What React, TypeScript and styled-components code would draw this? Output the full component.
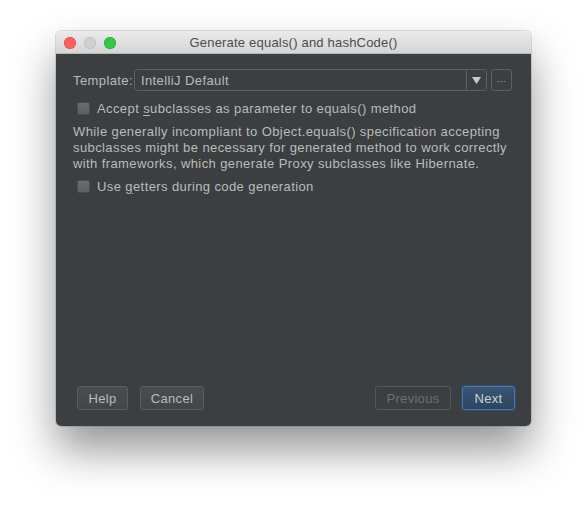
import React from "react";
import styled, { createGlobalStyle } from "styled-components";

const Global = createGlobalStyle`
  html, body { margin: 0; padding: 0; background: #ffffff; }
  body { font-family: "Liberation Sans", Arial, sans-serif; }
`;

const Page = styled.div`
  width: 586px;
  height: 507px;
  padding: 31px 0 0 56px;
  box-sizing: border-box;
`;

const Window = styled.div`
  width: 475px;
  height: 395px;
  border-radius: 5px;
  overflow: hidden;
  display: flex;
  flex-direction: column;
  box-shadow: 0 24px 44px rgba(0, 0, 0, 0.42), 0 0 0 1px rgba(0, 0, 0, 0.12);
`;

const TitleBar = styled.div`
  height: 23px;
  flex: 0 0 23px;
  position: relative;
  display: flex;
  align-items: center;
  justify-content: center;
  background: linear-gradient(#ebebeb, #d5d5d5);
  border-bottom: 1px solid #b8b8b8;
  box-sizing: border-box;
  color: #4c4c4c;
  font-size: 13px;
  letter-spacing: 0.2px;
`;

const Lights = styled.div`
  position: absolute;
  left: 8px;
  top: 6px;
  display: flex;
  gap: 8px;
`;

const Light = styled.span<{ $c: string; $b: string }>`
  width: 12px;
  height: 12px;
  border-radius: 50%;
  background: ${(p) => p.$c};
  box-shadow: inset 0 0 0 0.5px ${(p) => p.$b};
`;

const Body = styled.div`
  flex: 1;
  background: #3c3f41;
  color: #bbbbbb;
  font-size: 13px;
  letter-spacing: 0.4px;
  display: flex;
  flex-direction: column;
  padding: 15px 16px 16px 17px;
  box-sizing: border-box;
`;

const TemplateRow = styled.div`
  display: flex;
  align-items: center;
  height: 22px;
`;

const Label = styled.span`
  margin-right: 1px;
`;

const Combo = styled.div`
  width: 353px;
  height: 22px;
  box-sizing: border-box;
  border: 1px solid #5e6060;
  border-radius: 3px;
  display: flex;
  align-items: stretch;
  background: #3c3f41;
`;

const ComboText = styled.div`
  flex: 1;
  padding-left: 6px;
  display: flex;
  align-items: center;
  color: #bbbbbb;
`;

const ComboArrow = styled.div`
  width: 19px;
  border-left: 1px solid #5e6060;
  display: flex;
  align-items: center;
  justify-content: center;
`;

const DotsButton = styled.div`
  width: 21px;
  height: 22px;
  margin-left: 4px;
  box-sizing: border-box;
  border: 1px solid #5e6060;
  border-radius: 3px;
  display: flex;
  align-items: center;
  justify-content: center;
  color: #bbbbbb;
  font-size: 9px;
  letter-spacing: 0.5px;
  padding-bottom: 2px;
`;

const CheckRow = styled.div<{ $mt: number }>`
  display: flex;
  align-items: center;
  margin-top: ${(p) => p.$mt}px;
  margin-left: 4px;
  height: 18px;
`;

const Box = styled.span`
  width: 13px;
  height: 13px;
  box-sizing: border-box;
  border-radius: 2px;
  background: linear-gradient(#6b6e70, #5c5f61);
  border: 1px solid #4a4c4e;
  margin-right: 7px;
`;

const U = styled.span`
  text-decoration: underline;
  text-underline-offset: 2px;
`;

const Paragraph = styled.p`
  margin: 7px 0 0 0;
  line-height: 16px;
  width: 446px;
`;

const Spacer = styled.div`
  flex: 1;
`;

const Footer = styled.div`
  display: flex;
  align-items: center;
  padding-left: 4px;
`;

const Button = styled.div<{ $w: number; $variant?: "default" | "disabled" | "primary"; $ml?: number }>`
  width: ${(p) => p.$w}px;
  height: 24px;
  margin-left: ${(p) => p.$ml ?? 0}px;
  box-sizing: border-box;
  border-radius: 3px;
  display: flex;
  align-items: center;
  justify-content: center;
  font-size: 13px;
  letter-spacing: 0.3px;
  ${(p) =>
    p.$variant === "primary"
      ? `background: linear-gradient(#3a5676, #2c4460);
         border: 1px solid #4a76a8;
         box-shadow: 0 0 0 1px #2f4d6e;
         color: #d0d0d0;`
      : p.$variant === "disabled"
      ? `background: transparent;
         border: 1px solid #545759;
         color: #6d6f71;`
      : `background: linear-gradient(#4a4d4f, #434648);
         border: 1px solid #5a5d5f;
         color: #bbbbbb;`}
`;

export default function App() {
  return (
    <Page>
      <Global />
      <Window>
        <TitleBar>
          <Lights>
            <Light $c="#fc605c" $b="#de4a45" />
            <Light $c="#cfcfcf" $b="#b9b9b9" />
            <Light $c="#34c84a" $b="#24a83a" />
          </Lights>
          Generate equals() and hashCode()
        </TitleBar>
        <Body>
          <TemplateRow>
            <Label>Template:</Label>
            <Combo>
              <ComboText>IntelliJ Default</ComboText>
              <ComboArrow>
                <svg width="9" height="7" viewBox="0 0 9 7">
                  <path d="M0 0 H9 L4.5 7 Z" fill="#c9c9c9" />
                </svg>
              </ComboArrow>
            </Combo>
            <DotsButton>...</DotsButton>
          </TemplateRow>
          <CheckRow $mt={8}>
            <Box />
            <span>
              Accept <U>s</U>ubclasses as parameter to equals() method
            </span>
          </CheckRow>
          <Paragraph>
            While generally incompliant to Object.equals() specification accepting subclasses might be
            necessary for generated method to work correctly with frameworks, which generate Proxy
            subclasses like Hibernate.
          </Paragraph>
          <CheckRow $mt={5}>
            <Box />
            <span>
              Use <U>g</U>etters during code generation
            </span>
          </CheckRow>
          <Spacer />
          <Footer>
            <Button $w={51}>Help</Button>
            <Button $w={64} $ml={12}>Cancel</Button>
            <Spacer />
            <Button $w={76} $variant="disabled">Previous</Button>
            <Button $w={53} $ml={11} $variant="primary">Next</Button>
          </Footer>
        </Body>
      </Window>
    </Page>
  );
}
